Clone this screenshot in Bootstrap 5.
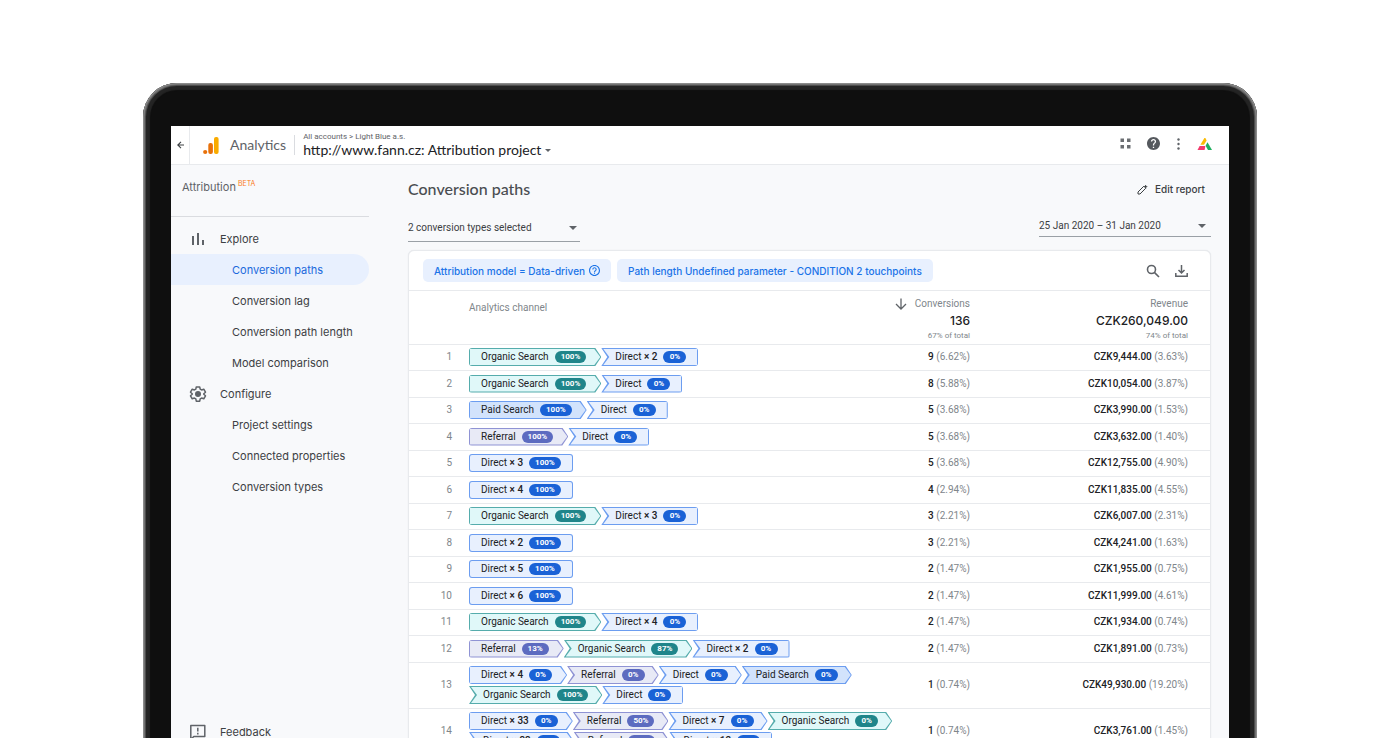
<!DOCTYPE html>
<html lang="en">
<head>
<meta charset="utf-8">
<meta name="viewport" content="width=device-width, initial-scale=1">
<title>Analytics – Conversion paths</title>
<link href="https://cdn.jsdelivr.net/npm/bootstrap@5.3.0/dist/css/bootstrap.min.css" rel="stylesheet">
<style>
  :root { --line: #e8eaed; --ink: #3c4043; --soft: #80868b; --blue: #1a73e8; }
  body { font-family: Roboto, "Liberation Sans", sans-serif; font-size: 10px; line-height: 16px; color: var(--ink); background: #fff; height: 100vh; overflow: hidden; padding: 83px 143px 0; }
  button, select { font-family: inherit; font-size: inherit; color: inherit; line-height: inherit; background: none; border: 0; padding: 0; }
  svg { display: block; flex: none; }
  .inter { font-family: Inter, "Liberation Sans", sans-serif; }
  .lato { font-family: Lato, "Liberation Sans", sans-serif; }

  .laptop { height: calc(100vh - 74px); padding: 43px 28px 0; background: #0f0f0f; border-radius: 34px 34px 0 0;
    box-shadow: inset 0 0 0 1px #8b8b8b, inset 0 0 0 2px #717171, inset 0 0 0 3px #4c4c4c, inset 0 0 1px 7px #242424; }
  .screen { background: #f8f9fb; }

  .topbar { height: 39px; background: #fff; border-bottom: 1px solid var(--line); }
  .back { width: 19px; border-right: 1px solid var(--line); }
  .logo { margin: 0 11px 0 13px; }
  .product { font-size: 14px; color: #5f6368; }
  .rule { width: 1px; height: 20px; background: #dadce0; }
  .crumbs { font-size: 8px; line-height: 10px; color: #5f6368; }
  .property { font-size: 14px; line-height: 16px; color: #202124; }
  .caret { width: 0; height: 0; border: solid transparent; border-width: 3px 3px 0; border-top-color: #5f6368; }
  .tools { gap: 16px; padding: 0 16px 3px 0; }

  .side { width: 198px; flex: none; }
  .side-title { height: 52px; padding: 14px 0 0 11px; border-bottom: 1px solid #dadce0; font-size: 11px; color: #5f6368; }
  .beta { font-size: 7px; line-height: 10px; color: #fa7b17; margin-left: 2px; }
  .menu { padding-top: 6px; }
  .side .nav-link { height: 31px; padding: 0 0 0 61px; font-size: 11px; color: var(--ink); display: flex; align-items: center; }
  .side .nav-link.group { padding-left: 18px; gap: 13px; }
  .side .nav-link.active { background: #e8f0fe; color: #1a69dc; border-radius: 0 16px 16px 0; }

  .report { min-width: 0; padding: 14px 18px 0 39px; }
  .report-title { font-size: 16px; line-height: 20px; color: #4a4d51; }
  .edit { gap: 7px; padding-right: 6px; font-size: 10px; font-weight: 500; }
  .pick { position: relative; width: 172px; border-bottom: 1px solid #9aa0a6; }
  .pick select { width: 100%; height: 26px; appearance: none; }
  .pick.dates select { height: 21px; }
  .pick .caret { position: absolute; right: 3px; top: 11px; border-width: 4px 4px 0; }
  .pick.dates .caret { right: 5px; top: 9px; }

  .panel { background: #fff; border: 1px solid var(--line); border-radius: 6px 6px 0 0; margin-top: 8px; box-shadow: 0 0 1px #dadce0; }
  .filters { height: 40px; padding: 0 21px 0 14px; gap: 6px; border-bottom: 1px solid var(--line); }
  .filter { height: 23px; border-radius: 5px; padding: 0 11px; background: #e8f0fe; color: var(--blue); font-size: 10px; font-weight: 500; display: flex; align-items: center; gap: 4px; }

  .paths { width: 100%; table-layout: fixed; }
  .paths tr { border-bottom: 1px solid var(--line); }
  .paths th { font-weight: 400; color: var(--soft); height: 53px; padding: 5px 0 0; vertical-align: top; }
  .paths th:nth-child(2) { padding-top: 9px; }
  .paths tbody tr { height: 26px; }
  .paths tbody tr:nth-child(even) { height: 27px; }
  .paths tbody tr.tall { height: 46px; }
  .paths td { padding: 0; }
  .c-num { width: 60px; }
  .c-conv { width: 110px; }
  .c-rev { width: 240px; }
  .paths td:first-child { text-align: right; padding-right: 17px; color: var(--soft); }
  .paths th:nth-child(n+3), .paths td:nth-child(n+3) { text-align: right; }
  .paths th:nth-child(4), .paths td:nth-child(4) { padding-right: 22px; }
  .paths td span.share { color: var(--soft); }
  .paths td b { font-weight: 500; color: #202124; }
  .sum { font-size: 12px; font-weight: 500; color: #202124; line-height: 17px; }
  .of { font-size: 8px; line-height: 13px; }

  .trail { display: flex; height: 18px; }
  .trail + .trail { margin-top: 2px; }
  .step { position: relative; z-index: 0; display: flex; align-items: center; gap: 6px; height: 18px; padding: 0 12px; border-radius: 3px; background: var(--edge); color: #202124; white-space: nowrap; }
  .step::before { content: ""; position: absolute; z-index: -1; inset: 1px; border-radius: 2px; background: var(--fill); }
  .step b { font-weight: 500; }
  .step .pct { min-width: 23px; padding: 0 6px; height: 12px; line-height: 12px; border-radius: 6px; background: var(--tag); color: #fff; font-size: 8px; font-weight: 700; text-align: center; }
  .s-direct { --edge: #6c9df0; --fill: #e8f0fe; --tag: #1a62d6; }
  .s-paid { --edge: #6c9df0; --fill: #d2e3fc; --tag: #1a62d6; }
  .s-organic { --edge: #55acac; --fill: #e0f8f9; --tag: #1f858a; }
  .s-referral { --edge: #8f93d4; --fill: #e8eaf6; --tag: #5c6bc0; }
  .tip { padding-right: 15px; border-radius: 3px 0 0 3px; }
  .notch { padding-left: 14px; border-radius: 0 3px 3px 0; }
  .tip.notch { padding-right: 14px; border-radius: 0; }
  .tip::before, .notch::before { border-radius: 0; }
  .notch::before { left: 2px; }
  .tip, .tip::before { clip-path: polygon(0 0, calc(100% - 6px) 0, 100% 50%, calc(100% - 6px) 100%, 0 100%); }
  .notch, .notch::before { clip-path: polygon(0 0, 100% 0, 100% 100%, 0 100%, 6px 50%); }
  .tip.notch, .tip.notch::before { clip-path: polygon(0 0, calc(100% - 6px) 0, 100% 50%, calc(100% - 6px) 100%, 0 100%, 6px 50%); }
</style>
</head>
<body>
<div class="laptop d-flex flex-column">
  <div class="screen d-flex flex-column flex-grow-1 overflow-hidden">
    <header class="topbar d-flex align-items-center flex-shrink-0">
      <button class="back h-100 d-flex align-items-center justify-content-center" aria-label="Back">
        <svg width="7" height="8" viewBox="0 0 7 8" fill="none" stroke="#3c4043" stroke-width="1.100"><path d="M7 4H1M4 .8.800 4 4 7.200"/></svg>
      </button>
      <svg class="logo" width="16" height="19" viewBox="0 0 16 19"><rect x="11" y="1" width="4.600" height="17" rx="2" fill="#f9ab00"/><rect x="5.300" y="7" width="4.600" height="11" rx="2" fill="#e8710a"/><circle cx="2.200" cy="16" r="2.100" fill="#e8710a"/></svg>
      <span class="product lato">Analytics</span>
      <span class="rule mx-2"></span>
      <div>
        <div class="crumbs">All accounts &gt; Light Blue a.s.</div>
        <button class="property lato d-flex align-items-center gap-1">http://www.fann.cz: Attribution project <span class="caret"></span></button>
      </div>
      <div class="tools d-flex align-items-center ms-auto">
        <button aria-label="Apps"><svg width="11" height="11" viewBox="0 0 11 11" fill="#6b6e72"><path d="M.5.500h3.500V4H.5zM7 .5h3.500V4H7zM.5 7h3.500v3.500H.5zM7 7h3.500v3.500H7z"/></svg></button>
        <button aria-label="Help"><svg width="13" height="13" viewBox="2 2 20 20" fill="#55595e"><path d="M12 2C6.480 2 2 6.480 2 12s4.480 10 10 10 10-4.480 10-10S17.520 2 12 2zm1 17h-2v-2h2v2zm2.070-7.750l-.9.920C13.450 12.900 13 13.500 13 15h-2v-.5c0-1.100.45-2.100 1.170-2.830l1.240-1.260c.37-.36.590-.86.590-1.410 0-1.100-.9-2-2-2s-2 .9-2 2H8c0-2.210 1.790-4 4-4s4 1.790 4 4c0 .88-.36 1.680-.93 2.250z"/></svg></button>
        <button aria-label="More"><svg width="5" height="12" viewBox="0 0 5 12" fill="#5f6368"><circle cx="2.500" cy="1.500" r="1.200"/><circle cx="2.500" cy="6" r="1.200"/><circle cx="2.500" cy="10.500" r="1.200"/></svg></button>
        <button aria-label="Account"><svg width="16" height="14" viewBox="0 0 16 14"><path d="M7.400 1h1L9.600 3.400 7 7.800H3.400z" fill="#fbbc04"/><path d="M2.600 9H8.400l-.8 4H.5z" fill="#f23a6d"/><path d="m10.500 5.200 4.500 7.800h-4L8.600 8.700z" fill="#1eaf5f"/></svg></button>
      </div>
    </header>

    <div class="d-flex flex-grow-1 overflow-hidden">
      <aside class="side inter d-flex flex-column">
        <div class="side-title d-flex align-items-start flex-shrink-0">Attribution <span class="beta">BETA</span></div>
        <nav class="menu nav flex-column flex-nowrap">
          <a class="nav-link group" href="#explore"><svg width="18" height="12" viewBox="0 0 18 12" fill="#5f6368"><path d="M3 3h2v9H3zM8 0h2v12H8zM13 7h2v5h-2z"/></svg>Explore</a>
          <a class="nav-link active" aria-current="page" href="#paths">Conversion paths</a>
          <a class="nav-link" href="#lag">Conversion lag</a>
          <a class="nav-link" href="#length">Conversion path length</a>
          <a class="nav-link" href="#compare">Model comparison</a>
          <a class="nav-link group" href="#configure"><svg width="18" height="18" viewBox="0 0 24 24" fill="none" stroke="#5f6368" stroke-width="2" stroke-linejoin="round"><path d="M9.700 2.500h4.600l.6 3 1.900 1.100 2.900-1 2.300 4-2.300 2v.8l2.300 2-2.300 4-2.900-1-1.900 1.100-.6 3H9.700l-.6-3-1.900-1.100-2.900 1-2.300-4 2.300-2v-.8L2 9.600l2.300-4 2.900 1 1.900-1.100z"/><circle cx="12" cy="12" r="3" fill="#5f6368"/></svg>Configure</a>
          <a class="nav-link" href="#settings">Project settings</a>
          <a class="nav-link" href="#properties">Connected properties</a>
          <a class="nav-link" href="#types">Conversion types</a>
        </nav>
        <nav class="nav flex-column mt-auto">
          <a class="nav-link group" href="#feedback"><svg width="18" height="18" viewBox="0 0 18 18" fill="none" stroke="#5f6368" stroke-width="1.500" stroke-linejoin="round"><path d="M1.800 16.500V2.500h14v11H4.800z"/><path d="M8.800 4.800v3.600M8.800 9.800v1.600"/></svg>Feedback</a>
        </nav>
      </aside>

      <main class="report flex-grow-1">
        <div class="d-flex align-items-center justify-content-between">
          <h1 class="report-title lato m-0">Conversion paths</h1>
          <button class="edit inter d-flex align-items-center"><svg width="11" height="11" viewBox="0 0 11 11" fill="none" stroke="#3c4043"><path d="M1 10V8l5.800-5.800 2 2L3 10z"/><path d="m7.600 2.400 1-1 1.200 1.200-1 1z" fill="#3c4043"/></svg>Edit report</button>
        </div>
        <div class="d-flex justify-content-between align-items-start mt-3">
          <div class="pick"><select aria-label="Conversion types"><option>2 conversion types selected</option></select><span class="caret"></span></div>
          <div class="pick dates"><select aria-label="Date range"><option>25 Jan 2020 – 31 Jan 2020</option></select><span class="caret"></span></div>
        </div>

        <section class="panel">
          <div class="filters d-flex align-items-center">
            <button class="filter inter">Attribution model = Data-driven <svg width="11" height="11" viewBox="2 2 20 20" fill="#1a73e8"><path d="M11 18h2v-2h-2v2zm1-16C6.480 2 2 6.480 2 12s4.480 10 10 10 10-4.480 10-10S17.520 2 12 2zm0 18c-4.410 0-8-3.590-8-8s3.590-8 8-8 8 3.590 8 8-3.590 8-8 8zm0-14c-2.210 0-4 1.790-4 4h2c0-1.100.9-2 2-2s2 .9 2 2c0 2-3 1.750-3 5h2c0-2.250 3-2.500 3-5 0-2.210-1.790-4-4-4z"/></svg></button>
            <button class="filter inter">Path length Undefined parameter - CONDITION 2 touchpoints</button>
            <button class="ms-auto me-2" aria-label="Search"><svg width="14" height="14" viewBox="0 0 14 14" fill="none" stroke="#5f6368" stroke-width="1.600"><circle cx="5.500" cy="5.500" r="4"/><path d="m8.600 8.600 4.400 4.400"/></svg></button>
            <button aria-label="Download"><svg width="15" height="14" viewBox="0 0 15 14" fill="none" stroke="#5f6368" stroke-width="1.500"><path d="M7.500 1v8M4.500 6l3 3 3-3M1.800 9v3.200h11.400V9"/></svg></button>
          </div>
          <table class="paths">
            <colgroup><col class="c-num"><col><col class="c-conv"><col class="c-rev"></colgroup>
            <thead>
              <tr>
                <th></th>
                <th scope="col">Analytics channel</th>
                <th scope="col"><div class="d-flex justify-content-end align-items-center gap-2"><svg width="12" height="12" viewBox="0 0 12 12" fill="none" stroke="#5f6368" stroke-width="1.300"><path d="M6 .5v10.500M1 6l5 5 5-5"/></svg>Conversions</div><div class="sum inter">136</div><div class="of">67% of total</div></th>
                <th scope="col">Revenue<div class="sum inter">CZK260,049.00</div><div class="of">74% of total</div></th>
              </tr>
            </thead>
            <tbody id="rows"></tbody>
          </table>
        </section>
      </main>
    </div>
  </div>
</div>

<script>
  // Each path: lines of steps written as "channel[*count] credit"; then conversions and revenue.
  const paths = [
    [["o 100", "d*2 0"], "9", "6.62", "9,444", "3.63"],
    [["o 100", "d 0"], "8", "5.88", "10,054", "3.87"],
    [["p 100", "d 0"], "5", "3.68", "3,990", "1.53"],
    [["r 100", "d 0"], "5", "3.68", "3,632", "1.40"],
    [["d*3 100"], "5", "3.68", "12,755", "4.90"],
    [["d*4 100"], "4", "2.94", "11,835", "4.55"],
    [["o 100", "d*3 0"], "3", "2.21", "6,007", "2.31"],
    [["d*2 100"], "3", "2.21", "4,241", "1.63"],
    [["d*5 100"], "2", "1.47", "1,955", "0.75"],
    [["d*6 100"], "2", "1.47", "11,999", "4.61"],
    [["o 100", "d*4 0"], "2", "1.47", "1,934", "0.74"],
    [["r 13", "o 87", "d*2 0"], "2", "1.47", "1,891", "0.73"],
    [["d*4 0", "r 0", "d 0", "p 0", "/", "o 100", "d 0"], "1", "0.74", "49,930", "19.20"],
    [["d*33 0", "r 50", "d*7 0", "o 0", "/", "d*33 0", "r 50", "d*12 0"], "1", "0.74", "3,761", "1.45"]
  ];
  const names = { o: ["organic", "Organic Search"], d: ["direct", "Direct"], p: ["paid", "Paid Search"], r: ["referral", "Referral"] };
  document.getElementById("rows").innerHTML = paths.map(([steps, n, np, rev, rp], i) => {
    const trail = steps.map((s, k) => {
      if (s === "/") return '</div><div class="trail">';
      const [what, credit] = s.split(" "), [ch, count] = what.split("*"), [cls, label] = names[ch];
      const shape = (k ? " notch" : "") + (k < steps.length - 1 ? " tip" : "");
      return `<span class="step s-${cls}${shape}"><span>${label}${count ? ` <b>× ${count}</b>` : ""}</span><span class="pct">${credit}%</span></span>`;
    }).join("");
    return `<tr class="${steps.includes("/") ? "tall" : ""}"><td>${i + 1}</td><td><div class="trail">${trail}</div></td>` +
      `<td><b>${n}</b> <span class="share">(${np}%)</span></td><td><b>CZK${rev}.00</b> <span class="share">(${rp}%)</span></td></tr>`;
  }).join("");
</script>
<script src="https://cdn.jsdelivr.net/npm/bootstrap@5.3.0/dist/js/bootstrap.bundle.min.js"></script>
</body>
</html>
